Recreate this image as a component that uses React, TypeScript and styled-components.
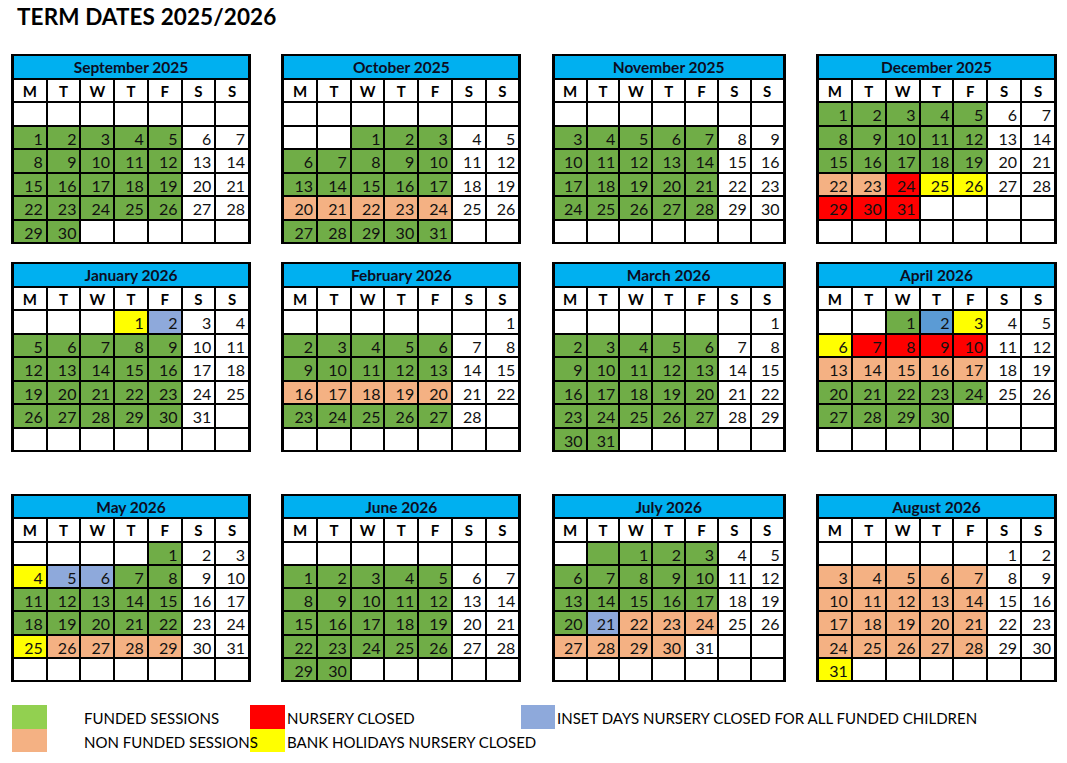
import React from "react";
import styled, { createGlobalStyle } from "styled-components";

const GlobalStyle = createGlobalStyle`
  html, body { margin: 0; padding: 0; background: #ffffff; }
  body { font-family: "Lato", "Open Sans", sans-serif; color: #000; }
`;

const COLORS: Record<string, string> = {
  g: "#70AD47",
  p: "#F4B183",
  r: "#FF0000",
  y: "#FFFF00",
  b: "#8EA9DB",
  d: "#5B9BD5",
};

type Month = { name: string; rows: string[] };

const MONTHS: Month[][] = [
  [
    {
      name: "September 2025",
      rows: [
        ". . . . . . .",
        "1g 2g 3g 4g 5g 6 7",
        "8g 9g 10g 11g 12g 13 14",
        "15g 16g 17g 18g 19g 20 21",
        "22g 23g 24g 25g 26g 27 28",
        "29g 30g . . . . .",
      ],
    },
    {
      name: "October 2025",
      rows: [
        ". . . . . . .",
        ". . 1g 2g 3g 4 5",
        "6g 7g 8g 9g 10g 11 12",
        "13g 14g 15g 16g 17g 18 19",
        "20p 21p 22p 23p 24p 25 26",
        "27g 28g 29g 30g 31g . .",
      ],
    },
    {
      name: "November 2025",
      rows: [
        ". . . . . . .",
        "3g 4g 5g 6g 7g 8 9",
        "10g 11g 12g 13g 14g 15 16",
        "17g 18g 19g 20g 21g 22 23",
        "24g 25g 26g 27g 28g 29 30",
        ". . . . . . .",
      ],
    },
    {
      name: "December 2025",
      rows: [
        "1g 2g 3g 4g 5g 6 7",
        "8g 9g 10g 11g 12g 13 14",
        "15g 16g 17g 18g 19g 20 21",
        "22p 23p 24r 25y 26y 27 28",
        "29r 30r 31r . . . .",
        ". . . . . . .",
      ],
    },
  ],
  [
    {
      name: "January 2026",
      rows: [
        ". . . 1y 2b 3 4",
        "5g 6g 7g 8g 9g 10 11",
        "12g 13g 14g 15g 16g 17 18",
        "19g 20g 21g 22g 23g 24 25",
        "26g 27g 28g 29g 30g 31 .",
        ". . . . . . .",
      ],
    },
    {
      name: "February 2026",
      rows: [
        ". . . . . . 1",
        "2g 3g 4g 5g 6g 7 8",
        "9g 10g 11g 12g 13g 14 15",
        "16p 17p 18p 19p 20p 21 22",
        "23g 24g 25g 26g 27g 28 .",
        ". . . . . . .",
      ],
    },
    {
      name: "March 2026",
      rows: [
        ". . . . . . 1",
        "2g 3g 4g 5g 6g 7 8",
        "9g 10g 11g 12g 13g 14 15",
        "16g 17g 18g 19g 20g 21 22",
        "23g 24g 25g 26g 27g 28 29",
        "30g 31g . . . . .",
      ],
    },
    {
      name: "April 2026",
      rows: [
        ". . 1g 2d 3y 4 5",
        "6y 7r 8r 9r 10r 11 12",
        "13p 14p 15p 16p 17p 18 19",
        "20g 21g 22g 23g 24g 25 26",
        "27g 28g 29g 30g . . .",
        ". . . . . . .",
      ],
    },
  ],
  [
    {
      name: "May 2026",
      rows: [
        ". . . . 1g 2 3",
        "4y 5b 6b 7g 8g 9 10",
        "11g 12g 13g 14g 15g 16 17",
        "18g 19g 20g 21g 22g 23 24",
        "25y 26p 27p 28p 29p 30 31",
        ". . . . . . .",
      ],
    },
    {
      name: "June 2026",
      rows: [
        ". . . . . . .",
        "1g 2g 3g 4g 5g 6 7",
        "8g 9g 10g 11g 12g 13 14",
        "15g 16g 17g 18g 19g 20 21",
        "22g 23g 24g 25g 26g 27 28",
        "29g 30g . . . . .",
      ],
    },
    {
      name: "July 2026",
      rows: [
        ". g 1g 2g 3g 4 5",
        "6g 7g 8g 9g 10g 11 12",
        "13g 14g 15g 16g 17g 18 19",
        "20g 21b 22p 23p 24p 25 26",
        "27p 28p 29p 30p 31 . .",
        ". . . . . . .",
      ],
    },
    {
      name: "August 2026",
      rows: [
        ". . . . . 1 2",
        "3p 4p 5p 6p 7p 8 9",
        "10p 11p 12p 13p 14p 15 16",
        "17p 18p 19p 20p 21p 22 23",
        "24p 25p 26p 27p 28p 29 30",
        "31y . . . . . .",
      ],
    },
  ],
];

const DAYS = ["M", "T", "W", "T", "F", "S", "S"];
const ROW_HEIGHTS = [190, 190, 188];
const ROW_GAPS = [18, 42, 23];

const Page = styled.div`
  width: 1067px;
  box-sizing: border-box;
  padding: 2px 10px 0 11px;
  display: flex;
  flex-direction: column;
`;

const Title = styled.h1`
  margin: 0 0 22px 0;
  padding-left: 6px;
  font-size: 22.5px;
  line-height: 30px;
  font-weight: 700;
  color: #000;
  letter-spacing: 0.1px;
`;

const MonthRow = styled.div<{ $gap: number }>`
  display: grid;
  grid-template-columns: 240px 240px 234px 241px;
  justify-content: space-between;
  margin-bottom: ${(p) => p.$gap}px;
`;

const MonthTable = styled.div<{ $h: number }>`
  height: ${(p) => p.$h}px;
  box-sizing: border-box;
  background: #000;
  padding: 2px 3px;
  display: grid;
  grid-template-columns: repeat(7, 1fr);
  grid-template-rows: repeat(8, 1fr);
  gap: 2px;
`;

const MonthHeader = styled.div`
  grid-column: 1 / -1;
  background: #00b0f0;
  display: flex;
  align-items: center;
  justify-content: center;
  font-weight: 700;
  font-size: 15.5px;
  color: #0d0d1f;
  padding-top: 1px;
`;

const DayHead = styled.div`
  background: #fff;
  display: flex;
  align-items: center;
  justify-content: center;
  font-weight: 700;
  font-size: 15px;
  padding-top: 1px;
`;

const DayCell = styled.div<{ $bg: string }>`
  background: ${(p) => p.$bg};
  display: flex;
  align-items: center;
  justify-content: flex-end;
  padding: 2px 3px 0 0;
  font-size: 16px;
  color: #111;
  min-width: 0;
`;

const Legend = styled.div`
  margin-left: 1px;
  display: grid;
  grid-template-columns: 35px 203px 35px 236px 34px auto;
  grid-template-rows: 24px 23px;
`;

const Swatch = styled.div<{ $bg: string; $col: number; $row: number }>`
  background: ${(p) => p.$bg};
  grid-column: ${(p) => p.$col};
  grid-row: ${(p) => p.$row};
`;

const LegendLabel = styled.div<{ $col: number; $row: number; $pad: number }>`
  grid-column: ${(p) => p.$col};
  grid-row: ${(p) => p.$row};
  padding-left: ${(p) => p.$pad}px;
  position: relative;
  z-index: 1;
  white-space: nowrap;
  font-size: 15px;
  display: flex;
  align-items: center;
  padding-top: 2px;
  color: #000;
`;

function parse(token: string) {
  if (token === ".") return { n: "", c: "#fff" };
  const m = token.match(/^(\d*)([a-z]?)$/);
  const n = m ? m[1] : "";
  const c = m && m[2] ? COLORS[m[2]] : "#fff";
  return { n, c };
}

function MonthCalendar({ month, height }: { month: Month; height: number }) {
  return (
    <MonthTable $h={height}>
      <MonthHeader>{month.name}</MonthHeader>
      {DAYS.map((d, i) => (
        <DayHead key={`h${i}`}>{d}</DayHead>
      ))}
      {month.rows.map((row, ri) =>
        row.split(" ").map((tok, ci) => {
          const { n, c } = parse(tok);
          return (
            <DayCell key={`${ri}-${ci}`} $bg={c}>
              {n}
            </DayCell>
          );
        })
      )}
    </MonthTable>
  );
}

export default function App() {
  return (
    <>
      <GlobalStyle />
      <Page>
        <Title>TERM DATES 2025/2026</Title>
        {MONTHS.map((row, i) => (
          <MonthRow key={i} $gap={ROW_GAPS[i]}>
            {row.map((m) => (
              <MonthCalendar key={m.name} month={m} height={ROW_HEIGHTS[i]} />
            ))}
          </MonthRow>
        ))}
        <Legend>
          <Swatch $bg="#92D050" $col={1} $row={1} />
          <Swatch $bg="#F4B183" $col={1} $row={2} />
          <LegendLabel $col={2} $row={1} $pad={37}>FUNDED SESSIONS</LegendLabel>
          <LegendLabel $col={2} $row={2} $pad={37}>NON FUNDED SESSIONS</LegendLabel>
          <Swatch $bg="#FF0000" $col={3} $row={1} />
          <Swatch $bg="#FFFF00" $col={3} $row={2} />
          <LegendLabel $col={4} $row={1} $pad={2}>NURSERY CLOSED</LegendLabel>
          <LegendLabel $col={4} $row={2} $pad={2}>BANK HOLIDAYS NURSERY CLOSED</LegendLabel>
          <Swatch $bg="#8EA9DB" $col={5} $row={1} />
          <LegendLabel $col={6} $row={1} $pad={2}>
            INSET DAYS NURSERY CLOSED FOR ALL FUNDED CHILDREN
          </LegendLabel>
        </Legend>
      </Page>
    </>
  );
}
